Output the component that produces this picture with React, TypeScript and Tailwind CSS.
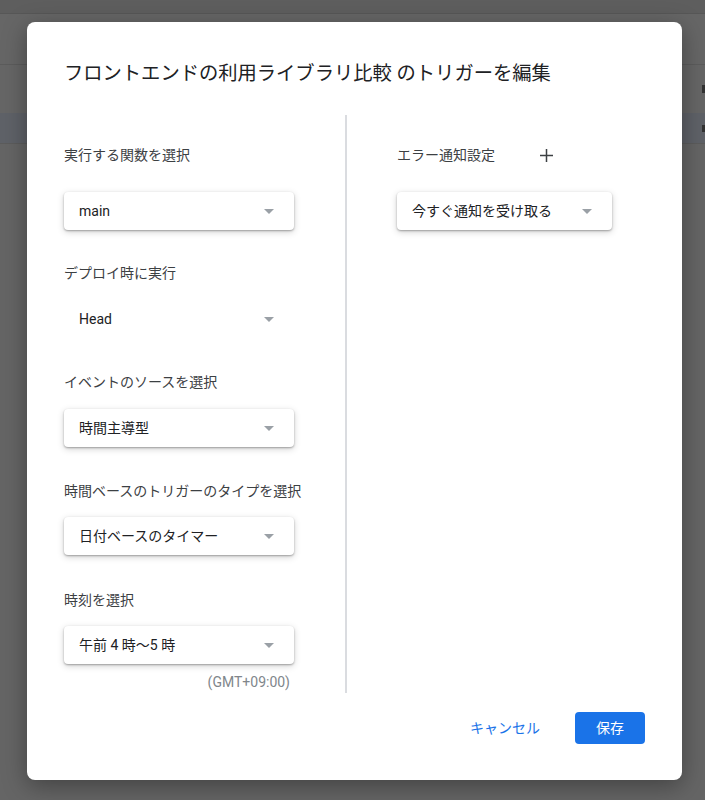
import * as React from 'react';

const font = { fontFamily: 'Roboto, "Noto Sans CJK JP", "Noto Sans", sans-serif' };

// small grey caret used by the select boxes
const Caret = () => (
  <svg width="10" height="5" viewBox="0 0 10 5" className="shrink-0">
    <path d="M0 0h10L5 5z" fill="#9aa0a6" />
  </svg>
);

type SelectProps = { value: string; flat?: boolean; className?: string };

const Select = ({ value, flat, className }: SelectProps) => (
  <div
    className={
      'flex h-[38px] items-center justify-between rounded pl-[15px] pr-[20px] text-[14px] text-[#202124] ' +
      (flat ? '' : 'bg-white shadow-[0_1px_2px_rgba(0,0,0,0.3),0_2px_7px_rgba(0,0,0,0.18)] ') +
      (className ?? '')
    }
  >
    <span>{value}</span>
    <Caret />
  </div>
);

const Label = ({ children, className }: { children: React.ReactNode; className?: string }) => (
  <div className={'h-5 whitespace-nowrap text-[14px] leading-5 text-[#3c4043] ' + (className ?? '')}>
    {children}
  </div>
);

const App = () => {
  return (
    <div className="relative h-[800px] w-[705px] overflow-hidden bg-[#656565]" style={font}>
      {/* page behind the overlay */}
      <div className="flex flex-col">
        <div className="h-[13px] bg-[#5e5e5e]" />
        <div className="h-px bg-[#575757]" />
        <div className="h-[50px] bg-[#666666]" />
        <div className="h-px bg-[#5c5c5c]" />
        <div className="relative h-[48px] bg-[#666666]">
          <div className="absolute right-0 top-[20px] h-[8px] w-[3px] bg-[#333]" />
        </div>
        <div className="relative h-[30px] bg-[#5f6268]">
          <div className="absolute right-0 top-[12px] h-[7px] w-[3px] bg-[#333]" />
        </div>
        <div className="h-px bg-[#5c5c5c]" />
      </div>

      {/* dialog */}
      <div className="absolute left-[27px] top-[22px] flex h-[758px] w-[655px] flex-col rounded-lg bg-white shadow-[0_6px_24px_rgba(0,0,0,0.35)]">
        <h1 className="whitespace-nowrap pl-[37px] pt-[38px] text-[19.3px] leading-7 text-[#202124]">
          フロントエンドの利用ライブラリ比較 のトリガーを編集
        </h1>

        <div className="mt-[27px] flex pl-[37px]">
          {/* left column */}
          <div className="flex w-[230px] flex-col pt-[30px]">
            <Label>実行する関数を選択</Label>
            <Select value="main" className="mt-[27px]" />
            <Label className="mt-[33px]">デプロイ時に実行</Label>
            <Select value="Head" flat className="mt-[17px]" />
            <Label className="mt-[34px]">イベントのソースを選択</Label>
            <Select value="時間主導型" className="mt-[17px]" />
            <Label className="mt-[34px]">時間ベースのトリガーのタイプを選択</Label>
            <Select value="日付ベースのタイマー" className="mt-[16px]" />
            <Label className="mt-[35px]">時刻を選択</Label>
            <Select value="午前 4 時〜5 時" className="mt-[16px]" />
            <div className="mt-[8px] pr-[4px] text-right text-[14px] leading-5 text-[#80868b]">(GMT+09:00)</div>
          </div>

          <div className="ml-[51px] h-[578px] w-[2px] bg-[#dadce0]" />

          {/* right column */}
          <div className="flex flex-col pl-[50px] pt-[30px]">
            <div className="flex items-center">
              <Label>エラー通知設定</Label>
              <svg width="13" height="13" viewBox="0 0 13 13" className="ml-[45px]">
                <path d="M6.5 0v13M0 6.5h13" stroke="#3c4043" strokeWidth="1.5" />
              </svg>
            </div>
            <Select value="今すぐ通知を受け取る" className="mt-[27px] w-[215px]" />
          </div>
        </div>

        <div className="mt-auto flex items-center justify-end pb-[36px] pr-[37px]">
          <button className="h-8 px-4 text-[14px] text-[#1a73e8]">キャンセル</button>
          <button className="ml-[19px] h-8 w-[70px] rounded bg-[#1a73e8] text-[14px] text-white">保存</button>
        </div>
      </div>
    </div>
  );
};

export default App;
